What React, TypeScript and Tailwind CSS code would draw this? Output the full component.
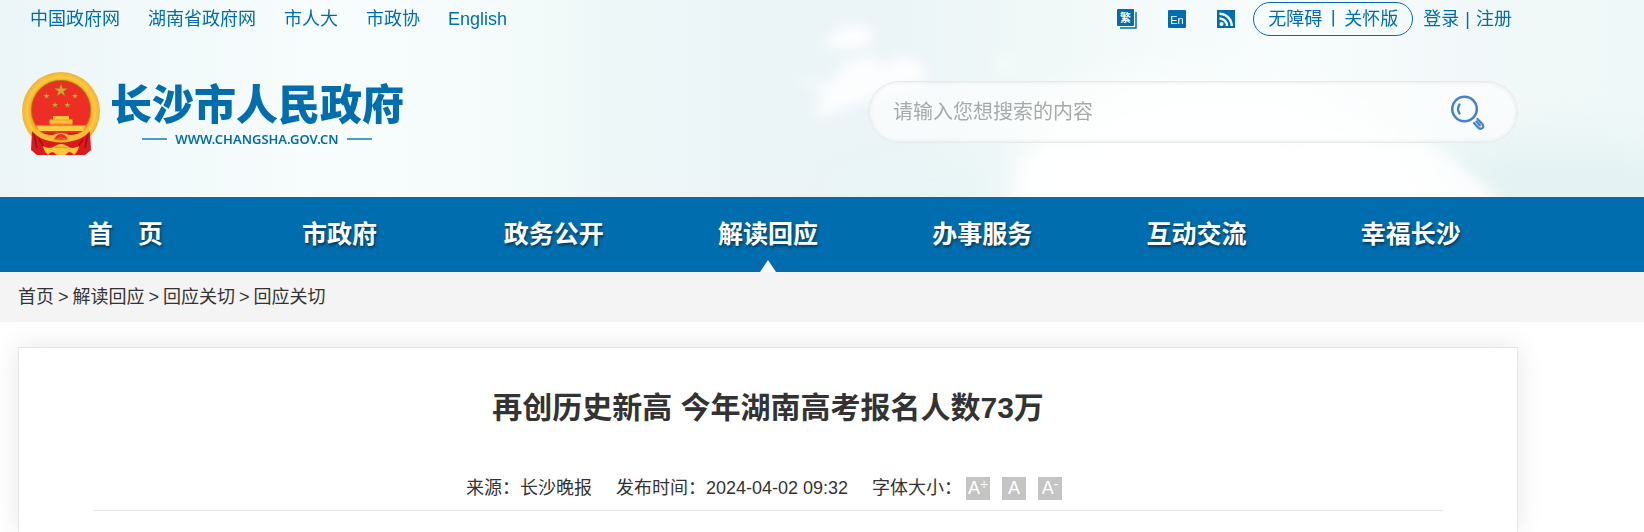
import { useState } from 'react'

const TOP_LINKS = ['中国政府网', '湖南省政府网', '市人大', '市政协', 'English']

const NAV = ['首\u3000页', '市政府', '政务公开', '解读回应', '办事服务', '互动交流', '幸福长沙']

const CRUMBS = ['首页', '解读回应', '回应关切', '回应关切']

const STAR = '0,-1 0.23,-0.31 0.95,-0.31 0.37,0.12 0.59,0.81 0,0.38 -0.59,0.81 -0.37,0.12 -0.95,-0.31 -0.23,-0.31'

function Sky() {
  return (
    <svg aria-hidden="true" viewBox="0 0 1644 197" preserveAspectRatio="none" className="absolute inset-0 -z-10 size-full">
      <defs>
        <linearGradient id="sky" x1="0" x2="1" y1="0" y2="0">
          <stop offset="0" stopColor="#ebf5f8" />
          <stop offset="0.08" stopColor="#f1f9fa" />
          <stop offset="0.2" stopColor="#f7fcfc" />
          <stop offset="0.3" stopColor="#f5fbfb" />
          <stop offset="0.36" stopColor="#eff8f8" />
          <stop offset="0.44" stopColor="#ebf4f7" />
          <stop offset="0.55" stopColor="#ebf4f7" />
          <stop offset="0.64" stopColor="#f1f9f8" />
          <stop offset="0.78" stopColor="#f7fcfc" />
          <stop offset="0.9" stopColor="#f2f8f9" />
          <stop offset="1" stopColor="#eff8f8" />
        </linearGradient>
        <filter id="soft" x="-50%" y="-50%" width="200%" height="200%"><feGaussianBlur stdDeviation="7" /></filter>
        <filter id="haze" x="-50%" y="-100%" width="200%" height="300%"><feGaussianBlur stdDeviation="24" /></filter>
      </defs>
      <rect width="1644" height="197" fill="url(#sky)" />
      <g filter="url(#haze)">
        <ellipse cx="1540" cy="190" rx="200" ry="50" fill="#e4f2f3" />
        <ellipse cx="930" cy="190" rx="120" ry="30" fill="#e8f5f5" />
        <path d="M1000 230L1040 120 1140 80 1280 90 1400 140 1500 230z" fill="#fff" opacity="0.8" />
      </g>
      <g filter="url(#soft)" fill="#fff">
        <path d="M820 46L840 28 860 24 876 34 868 44 845 48z" />
        <path d="M790 78L830 84 842 64 870 54 884 66 900 54 918 60 930 80 900 88 860 104 820 118 812 108 828 96z" opacity="0.85" />
        <ellipse cx="1005" cy="64" rx="12" ry="8" opacity="0.5" />
        <path d="M1015 215L1020 160 1046 142 1080 150 1130 134 1200 142 1262 138 1290 150 1340 132 1376 146 1420 142 1450 156 1462 168 1480 182 1512 215z" opacity="0.8" />
      </g>
    </svg>
  )
}

function Emblem() {
  return (
    <svg aria-hidden="true" viewBox="0 0 78 83" className="h-[83px] w-[78px] shrink-0">
      <defs>
        <radialGradient id="gold" gradientUnits="userSpaceOnUse" cx="39" cy="39" r="39">
          <stop offset="0.75" stopColor="#e8a024" />
          <stop offset="0.86" stopColor="#fdc93c" />
          <stop offset="1" stopColor="#f0b43a" />
        </radialGradient>
      </defs>
      <circle cx="39" cy="39" r="39" fill="url(#gold)" />
      <circle cx="39" cy="38" r="30" fill="#b0701a" />
      <circle cx="39" cy="38" r="29" fill="#ee2d24" />
      <g fill="#d9a035" stroke="#9c5c18" strokeWidth="0.08">
        <polygon points={STAR} transform="translate(39 18.500) scale(7.500)" />
        <polygon points={STAR} transform="translate(24.500 24) scale(3.600)" />
        <polygon points={STAR} transform="translate(53 24) scale(3.600)" />
        <polygon points={STAR} transform="translate(33 33) scale(3.600)" />
        <polygon points={STAR} transform="translate(45.500 33) scale(3.600)" />
      </g>
      <path d="M31 44h16v3.500h3.500v5h-23v-5H31z" fill="#fdc735" />
      <path d="M30 48h18M28 51h22" stroke="#ea9430" strokeWidth="0.8" />
      <path d="M14 53.500h50l-3 5.500H17z" fill="#fdcb3f" />
      <path d="M21 61h12l-5 3zM57 61H45l5 3z" fill="#cf1b1a" />
      {/* ribbon */}
      <path d="M10 59q7 8 18 10 11 3 22 0 11-2 18-10l1 19-6 5H15l-6-5z" fill="#dc1a1d" />
      <path d="M12 62l3 14M17 67l5 8M66 62l-3 14M61 67l-5 8" stroke="#a80f14" strokeWidth="1.600" />
      <path d="M10 59q8 8 20 10l3-3q2-4 6-4t6 4l3 3q12-2 20-10l-4-1q-7 5-17 5-4-2-8-2t-8 2q-10 0-17-5z" fill="#f9bd38" />
      <path d="M35 67q4-3 8 0" fill="none" stroke="#cf8418" strokeWidth="1" />
      <path d="M21 74q7 4 12 0 3-2 6-2t6 2q5 4 12 0-1 6-5 9-2-3-5-3l-4 3h-8l-4-3q-3 0-5 3-4-3-5-9z" fill="#fbc83c" />
      <path d="M33 76q6-2 12 0" fill="none" stroke="#d98f20" strokeWidth="1" />
    </svg>
  )
}

function SearchIcon() {
  return (
    <svg aria-hidden="true" viewBox="0 0 34 35" className="h-[35px] w-[34px]" fill="none" stroke="#4682c8">
      <circle cx="13.500" cy="14" r="12.300" strokeWidth="2.600" />
      <path d="M8.500 9.500q-3 4.500 0 9" strokeWidth="2.400" strokeLinecap="round" />
      <path d="M23 28l4.500 5q2.200 1.500 4 0 1.500-1.800 0-3.800l-5-5.200M25.500 26.500l3.500 4" strokeWidth="2.200" strokeLinecap="round" />
    </svg>
  )
}

function SiteTools() {
  return (
    <div className="flex items-center">
      <a href="#" aria-label="繁体版" className="mr-[31px]">
        <svg viewBox="0 0 20 20" className="size-5">
          <path d="M19 3v16H3" fill="none" stroke="#006eae" strokeWidth="1.500" />
          <rect width="17" height="17" rx="1" fill="#006eae" />
          <text x="8.500" y="12.500" textAnchor="middle" fontSize="11" fontWeight="700" fill="#fff">繁</text>
        </svg>
      </a>
      <a href="#" aria-label="English" className="mr-[31px]">
        <svg viewBox="0 0 18 18" className="size-[18px]">
          <rect width="18" height="18" rx="1" fill="#006eae" />
          <text x="9" y="14" textAnchor="middle" fontSize="11" fill="#fff">En</text>
        </svg>
      </a>
      <a href="#" aria-label="RSS" className="mr-[18px]">
        <svg viewBox="0 0 18 18" className="size-[18px]">
          <rect width="18" height="18" fill="#006eae" />
          <circle cx="4.500" cy="14" r="2" fill="#fff" />
          <path d="M2.500 8.500a7.500 7.500 0 0 1 7.500 7.500M2.500 3.800a12.200 12.200 0 0 1 12.200 12.200" fill="none" stroke="#fff" strokeWidth="2.400" />
        </svg>
      </a>
      <div className="mr-2.5 flex h-[34px] items-center gap-0.5 rounded-full border border-[#006eae] px-3.5">
        <a href="#">无障碍</a>
        <span>丨</span>
        <a href="#">关怀版</a>
      </div>
      <div className="flex items-center gap-1.5 pr-1.5">
        <a href="#">登录</a>
        <span>|</span>
        <a href="#">注册</a>
      </div>
    </div>
  )
}

function Header() {
  return (
    <header className="relative isolate pr-[126px] pl-[18px] text-[#006eae]">
      <Sky />
      <div className="flex h-[38px] items-center justify-between">
        <div className="flex gap-7 pl-3">
          {TOP_LINKS.map((l) => <a key={l} href="#">{l}</a>)}
        </div>
        <SiteTools />
      </div>
      <div className="flex items-start justify-between pt-[34px] pb-[42px]">
        <a href="#" className="flex items-center gap-2.5 pl-1">
          <Emblem />
          <div className="flex flex-col items-center">
            <span className="text-[42px] leading-[50px] font-black">长沙市人民政府</span>
            <span className="flex items-center gap-2 font-['Noto_Sans'] text-[13px] leading-4 font-semibold">
              <span className="h-0.5 w-[25px] bg-[#4c9ccb]" />
              WWW.CHANGSHA.GOV.CN
              <span className="h-0.5 w-[25px] bg-[#4c9ccb]" />
            </span>
          </div>
        </a>
        <form className="mt-[9px] flex h-[62px] w-[650px] items-center rounded-full border border-[#e6eaea] bg-white/60 pr-8 pl-6 shadow-[inset_0_0_4px_rgba(0,0,0,0.1)]">
          <input
            aria-label="搜索"
            placeholder="请输入您想搜索的内容"
            className="min-w-0 flex-1 bg-transparent text-xl text-[#333] outline-none placeholder:text-[#a9a9a9]"
          />
          <button type="button" aria-label="搜索"><SearchIcon /></button>
        </form>
      </div>
    </header>
  )
}

function Nav() {
  const [active, setActive] = useState(3)

  return (
    <nav className="grid grid-cols-7 bg-[#006eae] pr-[126px] pl-[18px]">
      {NAV.map((n, i) => (
        <a
          key={n}
          href="#"
          onClick={() => setActive(i)}
          className="relative text-center text-[25px] leading-[75px] font-bold text-white [text-shadow:1px_2px_3px_rgba(0,0,0,0.5)]"
        >
          {n}
          {i === active && (
            <svg aria-hidden="true" viewBox="0 0 16 12" className="absolute bottom-0 left-1/2 h-3 w-4 -translate-x-1/2">
              <path d="M8 0l8 12H0z" fill="#fff" />
            </svg>
          )}
        </a>
      ))}
    </nav>
  )
}

function FontSizes() {
  const [size, setSize] = useState('')

  return (
    <div className="ml-1 flex gap-3">
      {['+', '', '-'].map((s) => (
        <button
          key={s}
          type="button"
          aria-label={`字体 A${s}`}
          aria-pressed={size === s}
          onClick={() => setSize(s)}
          className="flex h-[23px] w-6 items-center justify-center bg-[#c4c4c4] text-lg leading-none text-white"
        >
          A{s && <span className="-mt-2 text-sm leading-none">{s}</span>}
        </button>
      ))}
    </div>
  )
}

export default function App() {
  return (
    <div className="flex min-h-screen flex-col bg-white font-['Liberation_Sans','Noto_Sans_CJK_SC',sans-serif] text-lg leading-7 text-[#333]">
      <Header />
      <Nav />

      <div className="flex h-[50px] shrink-0 items-center gap-1 bg-[#f4f4f4] px-[18px]">
        {CRUMBS.map((c, i) => (
          <span key={i} className="flex gap-1">
            {i > 0 && <span>&gt;</span>}
            <a href="#">{c}</a>
          </span>
        ))}
      </div>

      <main className="flex flex-1 flex-col overflow-hidden pt-[25px] pr-[126px] pl-[18px]">
        <article className="flex-1 border border-b-0 border-[#e6e6e6] bg-white px-[75px] shadow-[0_0_25px_rgba(0,0,0,0.1)]">
          <h1 className="pt-[38px] text-center text-3xl leading-[44px] font-bold">再创历史新高 今年湖南高考报名人数73万</h1>
          <div className="mt-9 flex items-center justify-center gap-6 border-b border-[#e6e6e6] pt-2 pr-2 pb-2">
            <span>来源：长沙晚报</span>
            <span>发布时间：2024-04-02 09:32</span>
            <div className="flex items-center">
              <span>字体大小：</span>
              <FontSizes />
            </div>
          </div>
        </article>
      </main>
    </div>
  )
}
